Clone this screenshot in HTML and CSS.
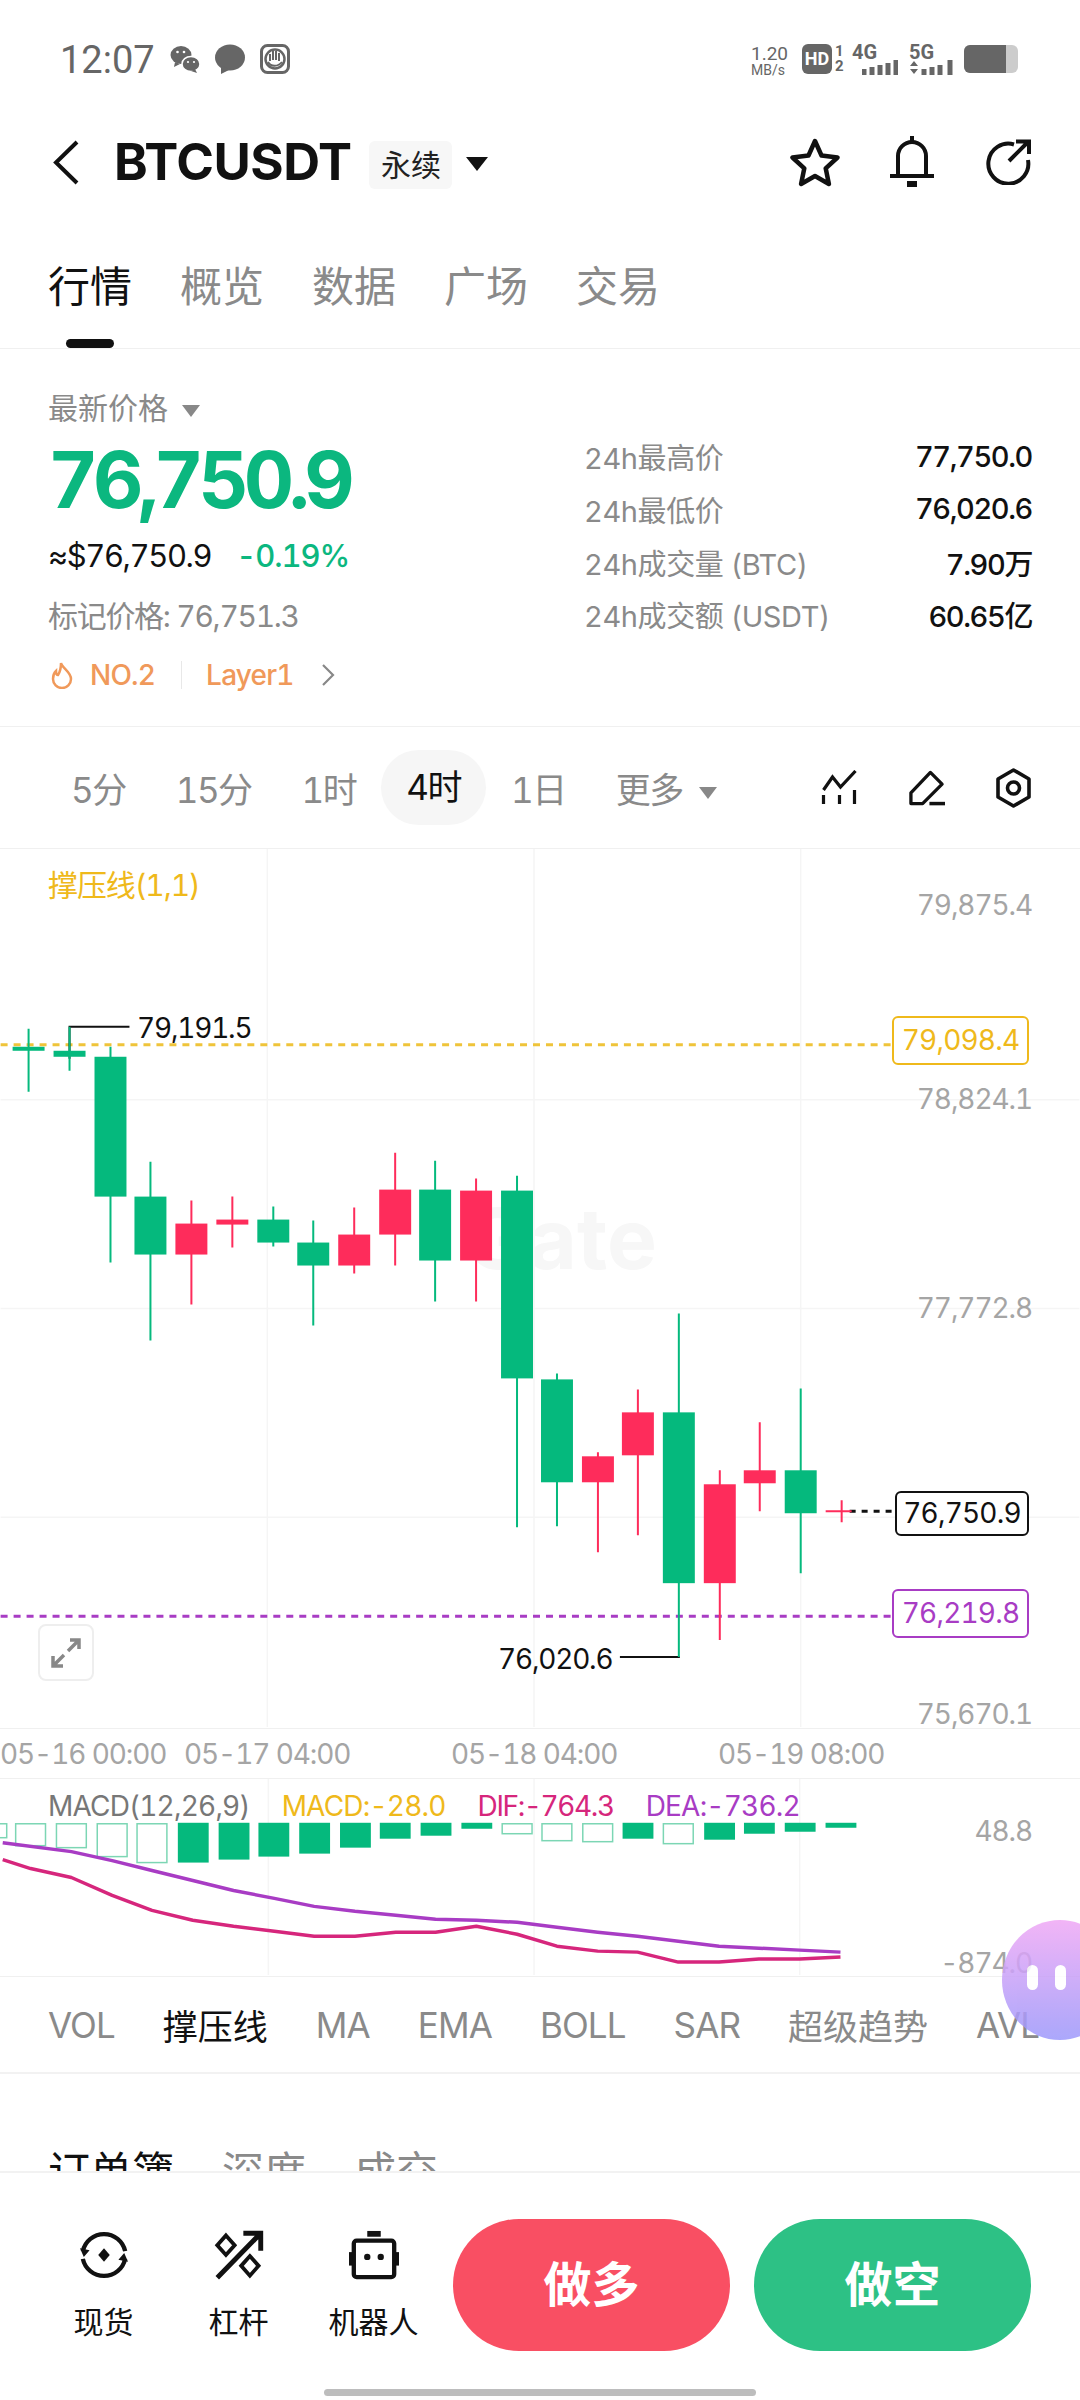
FILE: index.html
```html
<!DOCTYPE html>
<html lang="zh-CN">
<head>
  <meta charset="UTF-8" />
  <title>BTCUSDT 永续</title>
  <meta name="viewport" content="width=device-width, initial-scale=1" />
  <link rel="stylesheet" href="styles.css">
</head>
<body>
<div class="phone">

  <div class="status">
    <span class="clock">12:07</span>
    <svg class="st-icon" viewBox="0 0 30 30"><ellipse cx="11" cy="11" rx="10.500" ry="9" fill="#666"/><path d="M5 18l-1 5 6-3z" fill="#666"/><ellipse cx="21" cy="20" rx="9" ry="7.500" fill="#666" stroke="#fff" stroke-width="1.500"/><path d="M25 25l2 4-6-2z" fill="#666"/><circle cx="7.500" cy="8" r="1.300" fill="#fff"/><circle cx="14" cy="8" r="1.300" fill="#fff"/><circle cx="18" cy="18" r="1.100" fill="#fff"/><circle cx="24" cy="18" r="1.100" fill="#fff"/></svg>
    <svg class="st-icon" viewBox="0 0 30 30"><ellipse cx="15" cy="13.500" rx="15" ry="13" fill="#666"/><path d="M6 22l0 8 10-5z" fill="#666"/></svg>
    <svg class="st-icon" viewBox="0 0 30 30"><rect x="1.500" y="1.500" width="27" height="27" rx="6" fill="#fff" stroke="#666" stroke-width="3"/><circle cx="15" cy="15" r="9.500" fill="none" stroke="#666" stroke-width="2.500"/><path d="M10 17v-7M13 16V7M16 16V7M19 17V9M8 18c3 5 10 5 14 0" fill="none" stroke="#666" stroke-width="2"/></svg>
    <div class="st-right">
      <div class="speed"><span>1.20</span><span>MB/s</span></div>
      <span class="hd">HD</span>
      <div class="sim"><span>1</span><span>2</span></div>
      <div class="net">
        <span>4G</span>
        <svg class="bars" viewBox="0 0 36 15"><path d="M2 9v6M10 7v8M18 5v10M26 3v12M34 0v15" stroke="#666" stroke-width="5"/></svg>
      </div>
      <div class="net net-5g">
        <span>5G</span>
        <svg class="bars-5g" viewBox="0 0 44 15"><path d="M1 6l4-5 4 5zM1 9l4 5 4-5z" fill="#666"/><path d="M15 9v6M23 7v8M31 5v10M41 0v15" stroke="#666" stroke-width="5"/></svg>
      </div>
      <div class="battery"><div class="battery-fill"></div></div>
    </div>
  </div>

  <div class="header">
    <svg class="back" viewBox="0 0 27 45"><path d="M25 2L4 22.500 25 43" fill="none" stroke="#111" stroke-width="4"/></svg>
    <span class="symbol">BTCUSDT</span>
    <span class="contract">永续</span>
    <span class="tri tri-black"></span>
    <div class="header-actions">
      <svg class="act-star" viewBox="0 0 52 50"><path d="M26 4l6.500 14.500 16 2-11.800 10.800 3.200 15.700L26 39l-13.900 8 3.200-15.700L3.500 20.500l16-2z" fill="none" stroke="#111" stroke-width="4.500" stroke-linejoin="round"/></svg>
      <svg class="act-bell" viewBox="0 0 46 52"><path d="M9 39V20a14 14 0 0 1 28 0v19" fill="none" stroke="#111" stroke-width="4"/><path d="M23 0v7M1 40h44" stroke="#111" stroke-width="4"/><rect x="18" y="45" width="10" height="6" fill="#111"/></svg>
      <svg class="act-share" viewBox="0 0 48 46"><path d="M30 5.500A20 20 0 1 0 44 21" fill="none" stroke="#111" stroke-width="4"/><path d="M25 22L44 3M32 2.500h13V15" fill="none" stroke="#111" stroke-width="4"/></svg>
    </div>
  </div>

  <div class="tabs">
    <span class="tab tab-on">行情</span>
    <span class="tab">概览</span>
    <span class="tab">数据</span>
    <span class="tab">广场</span>
    <span class="tab">交易</span>
  </div>

  <div class="quote">
    <div class="quote-left">
      <div class="q-label">最新价格 <span class="tri tri-gray"></span></div>
      <div class="q-price">76,750.9</div>
      <div class="q-sub"><span>≈$76,750.9</span><span class="q-change">-0.19%</span></div>
      <div class="q-mark">标记价格: 76,751.3</div>
      <div class="q-tags">
        <svg class="flame" viewBox="0 0 22 28"><path d="M10 2c1 5 10 9 10 16a9 9 0 0 1-18 0c0-3 1-6 3-8 0 3 1 4 2 4 2-3 3-7 3-12z" fill="none" stroke="#f0995a" stroke-width="2.500"/></svg>
        <span>NO.2</span>
        <i class="q-div"></i>
        <span>Layer1</span>
        <svg class="q-arrow" viewBox="0 0 14 24"><path d="M2 2l10 10L2 22" fill="none" stroke="#888" stroke-width="2.200"/></svg>
      </div>
    </div>
    <div class="quote-right">
      <div class="stat"><span>24h最高价</span><b>77,750.0</b></div>
      <div class="stat"><span>24h最低价</span><b>76,020.6</b></div>
      <div class="stat"><span>24h成交量 (BTC)</span><b>7.90万</b></div>
      <div class="stat"><span>24h成交额 (USDT)</span><b>60.65亿</b></div>
    </div>
  </div>

  <div class="periods">
    <span>5分</span>
    <span>15分</span>
    <span>1时</span>
    <span class="period-on">4时</span>
    <span>1日</span>
    <span>更多 <i class="tri tri-gray"></i></span>
    <div class="period-tools">
      <svg class="tool" viewBox="0 0 36 36"><path d="M2 20L11 7l8 10L34 1" fill="none" stroke="#111" stroke-width="3.200"/><path d="M2 25v9M18 25v9M33 20v14" stroke="#111" stroke-width="3.200"/></svg>
      <svg class="tool" viewBox="0 0 38 36"><path d="M23 2l12 12-20 20H3V23z" fill="none" stroke="#111" stroke-width="3.400" stroke-linejoin="round"/><path d="M22 34h16" stroke="#111" stroke-width="3.600"/></svg>
      <svg class="tool tool-hex" viewBox="0 0 36 40"><path d="M18 2l15.500 9v18L18 38 2.500 29V11z" fill="none" stroke="#111" stroke-width="3.600" stroke-linejoin="round"/><circle cx="18" cy="20" r="6" fill="none" stroke="#111" stroke-width="3.600"/></svg>
    </div>
  </div>

  <div class="chart">
    <svg class="chart-svg" viewBox="0 850 1080 880">
      <path class="grid" d="M267 850V1729M534 850V1729M801 850V1729M0 1101H1080M0 1310H1080M0 1519H1080"/>
      <text class="watermark" x="657" y="1270" text-anchor="end">Gate</text>
      <path class="dash-yellow" d="M0 1046H892"/>
      <path class="dash-purple" d="M0 1618H892"/>
      <path class="dash-black" d="M850 1513H893"/>
      <path class="leader" d="M69 1060V1028H129M620 1659H680"/>
      <path class="wick-up" d="M28 1030V1093M69 1028V1072M110 1048V1264M150 1163V1342M273 1208V1248M313 1222V1327M435 1162V1303M517 1177V1529M557 1375V1528M679 1315V1659M801 1390V1575"/>
      <path class="wick-down" d="M191 1202V1306M232 1198V1249M354 1209V1275M395 1154V1267M476 1180V1303M598 1454V1554M638 1391V1537M720 1472V1642M760 1424V1513M842 1502V1524M826 1513H852"/>
      <g class="up">
        <rect x="12" y="1048" width="32" height="4"/>
        <rect x="53" y="1052" width="32" height="6"/>
        <rect x="94" y="1058" width="32" height="140"/>
        <rect x="134" y="1198" width="32" height="58"/>
        <rect x="257" y="1221" width="32" height="23"/>
        <rect x="297" y="1244" width="32" height="23"/>
        <rect x="419" y="1191" width="32" height="71"/>
        <rect x="501" y="1192" width="32" height="188"/>
        <rect x="541" y="1381" width="32" height="103"/>
        <rect x="663" y="1414" width="32" height="171"/>
        <rect x="785" y="1472" width="32" height="43"/>
      </g>
      <g class="down">
        <rect x="175" y="1225" width="32" height="31"/>
        <rect x="216" y="1221" width="32" height="5"/>
        <rect x="338" y="1236" width="32" height="31"/>
        <rect x="379" y="1191" width="32" height="45"/>
        <rect x="460" y="1192" width="32" height="70"/>
        <rect x="582" y="1458" width="32" height="26"/>
        <rect x="622" y="1414" width="32" height="43"/>
        <rect x="704" y="1486" width="32" height="99"/>
        <rect x="744" y="1472" width="32" height="13"/>
      </g>
    </svg>
    <span class="legend">撑压线(1,1)</span>
    <span class="axis axis-1">79,875.4</span>
    <span class="axis axis-2">78,824.1</span>
    <span class="axis axis-3">77,772.8</span>
    <span class="axis axis-4">75,670.1</span>
    <span class="mark mark-high">79,191.5</span>
    <span class="mark mark-low">76,020.6</span>
    <span class="tag tag-yellow">79,098.4</span>
    <span class="tag tag-black">76,750.9</span>
    <span class="tag tag-purple">76,219.8</span>
    <div class="expand">
      <svg viewBox="0 0 30 30"><path d="M17 13L27 3M19 2h9v9M13 17L3 27M2 18v10h10" fill="none" stroke="#888" stroke-width="3.500"/></svg>
    </div>
  </div>

  <div class="dates">
    <span>05-16 00:00</span>
    <span>05-17 04:00</span>
    <span>05-18 04:00</span>
    <span>05-19 08:00</span>
  </div>

  <div class="macd">
    <svg class="chart-svg" viewBox="0 1780 1080 198">
      <path class="grid" d="M267 1780V1977M534 1780V1977M801 1780V1977"/>
      <g class="hollow">
        <rect x="-12" y="1825" width="16" height="14"/>
        <rect x="13" y="1825" width="30" height="22"/>
        <rect x="54" y="1825" width="30" height="24"/>
        <rect x="95" y="1825" width="30" height="33"/>
        <rect x="135" y="1825" width="30" height="39"/>
        <rect x="502" y="1825" width="30" height="10"/>
        <rect x="542" y="1825" width="30" height="17"/>
        <rect x="583" y="1825" width="30" height="18"/>
        <rect x="664" y="1825" width="30" height="20"/>
      </g>
      <g class="up">
        <rect x="176" y="1824" width="31" height="40"/>
        <rect x="217" y="1824" width="31" height="37"/>
        <rect x="257" y="1824" width="31" height="34"/>
        <rect x="298" y="1824" width="31" height="31"/>
        <rect x="339" y="1824" width="31" height="25"/>
        <rect x="379" y="1824" width="31" height="16"/>
        <rect x="420" y="1824" width="31" height="13"/>
        <rect x="461" y="1824" width="31" height="6"/>
        <rect x="623" y="1824" width="31" height="16"/>
        <rect x="705" y="1824" width="31" height="17"/>
        <rect x="745" y="1824" width="31" height="11"/>
        <rect x="786" y="1824" width="31" height="9"/>
        <rect x="827" y="1824" width="31" height="5"/>
      </g>
      <polyline class="line-dea" points="0,1844 69,1853 110,1862 150,1872 191,1882 232,1892 273,1900 313,1908 354,1913 395,1917 435,1921 476,1922 517,1924 557,1929 598,1934 638,1938 679,1943 720,1948 760,1950 801,1952 842,1954"/>
      <polyline class="line-dif" points="0,1861 28,1870 69,1879 110,1897 150,1912 191,1922 232,1928 273,1933 313,1938 354,1938 395,1934 435,1934 476,1928 517,1936 557,1948 598,1953 638,1954 679,1964 720,1964 760,1961 801,1961 842,1959"/>
    </svg>
    <div class="macd-legend">
      <span class="c-gray">MACD(12,26,9)</span>
      <span class="c-yellow">MACD:-28.0</span>
      <span class="c-pink">DIF:-764.3</span>
      <span class="c-purple">DEA:-736.2</span>
    </div>
    <span class="axis macd-top">48.8</span>
    <span class="axis macd-bottom">-874.0</span>
  </div>

  <div class="indicators">
    <span>VOL</span>
    <span class="ind-on">撑压线</span>
    <span>MA</span>
    <span>EMA</span>
    <span>BOLL</span>
    <span>SAR</span>
    <span class="ind-wide">超级趋势</span>
    <span>AVL</span>
  </div>

  <div class="book-tabs">
    <span class="book-on">订单簿</span>
    <span>深度</span>
    <span>成交</span>
  </div>

  <div class="bottom">
    <div class="actions">
      <div class="action">
        <svg viewBox="0 0 52 52"><path d="M4 22A22.500 22.500 0 0 1 48 22M48 30A22.500 22.500 0 0 1 4 30" fill="none" stroke="#111" stroke-width="4.500"/><path d="M1 19l4 9 6-7zM51 33l-4-9-6 7z" fill="#111"/><path d="M26 19l6 7-6 7-6-7z" fill="#111"/></svg>
        <span>现货</span>
      </div>
      <div class="action">
        <svg viewBox="0 0 46 46"><path d="M3 44L42 4M27 3h16v16" fill="none" stroke="#111" stroke-width="4.500"/><path d="M11 5l8 9-8 9-8-9zM33 24l8 9-8 9-8-9z" fill="none" stroke="#111" stroke-width="3.500"/></svg>
        <span>杠杆</span>
      </div>
      <div class="action">
        <svg viewBox="0 0 52 50"><rect x="19" y="0" width="14" height="6" fill="#111"/><rect x="5" y="10" width="42" height="38" rx="3" fill="none" stroke="#111" stroke-width="4.500"/><rect x="0" y="22" width="3.500" height="14" fill="#111"/><rect x="48.500" y="22" width="3.500" height="14" fill="#111"/><circle cx="19" cy="27" r="3.300" fill="#111"/><circle cx="33" cy="27" r="3.300" fill="#111"/></svg>
        <span>机器人</span>
      </div>
    </div>
    <div class="trade trade-long">做多</div>
    <div class="trade trade-short">做空</div>
    <div class="home-line"></div>
  </div>

  <div class="assistant"><i></i><i></i></div>
</div>
</body>
</html>
```

FILE: styles.css
```css
html, body {
  margin: 0;
  background: #fff;
}

body {
  font-family: Inter, "Noto Sans CJK SC", sans-serif;
  font-variant-numeric: tabular-nums;
  color: #111;
}

.phone {
  position: relative;
  width: 1080px;
  height: 2400px;
  overflow: hidden;
  display: flex;
  flex-direction: column;
}

/* status bar */
.status {
  height: 120px;
  box-sizing: border-box;
  padding: 44px 60px 0;
  display: flex;
  align-items: flex-start;
  color: #666;
}

.clock {
  font-family: Roboto, sans-serif;
  font-size: 38px;
  line-height: 32px;
  width: 110px;
}

.st-icon {
  width: 30px;
  height: 30px;
  margin-right: 15px;
}

.st-right {
  margin-left: auto;
  margin-right: -1px;
  width: 270px;
  height: 32px;
  display: flex;
  font-family: Roboto, sans-serif;
}

.speed {
  width: 51px;
  display: flex;
  flex-direction: column;
  font-size: 14px;
  line-height: 14px;
}

.speed span:first-child {
  font-size: 19px;
  line-height: 19px;
}

.hd {
  width: 30px;
  height: 30px;
  border-radius: 6px;
  background: #666;
  color: #fff;
  font-size: 18px;
  font-weight: 700;
  line-height: 30px;
  text-align: center;
}

.sim {
  width: 20px;
  padding-left: 3px;
  box-sizing: border-box;
  display: flex;
  flex-direction: column;
  font-size: 15px;
  font-weight: 700;
  line-height: 15px;
}

.net {
  width: 57px;
  font-size: 20px;
  font-weight: 700;
  line-height: 16px;
}

.net span {
  display: block;
}

.bars {
  display: block;
  width: 36px;
  height: 15px;
  margin-left: 10px;
}

.net-5g {
  width: 55px;
}

.bars-5g {
  display: block;
  width: 44px;
  height: 15px;
}

.battery {
  width: 54px;
  height: 28px;
  margin-top: 1px;
  border-radius: 6px;
  background: #ccc;
  overflow: hidden;
}

.battery-fill {
  width: 42px;
  height: 28px;
  background: #666;
}

/* header */
.header {
  height: 92px;
  margin-top: -4px;
  padding: 0 48px 0 52px;
  display: flex;
  align-items: center;
}

.back {
  width: 27px;
  height: 45px;
  margin-right: 35px;
}

.symbol {
  font-size: 51px;
  font-weight: 700;
  letter-spacing: -0.500px;
  line-height: 60px;
}

.contract {
  margin-left: 18px;
  width: 83px;
  height: 48px;
  margin-top: 6px;
  background: #f7f7f7;
  border-radius: 6px;
  font-size: 30px;
  line-height: 48px;
  text-align: center;
  color: #222;
}

.tri {
  display: inline-block;
  width: 0;
  height: 0;
  border-left: 9px solid transparent;
  border-right: 9px solid transparent;
}

.tri-black {
  margin-left: 14px;
  margin-top: 4px;
  border-left-width: 11px;
  border-right-width: 11px;
  border-top: 14px solid #111;
}

.tri-gray {
  border-top: 12px solid #888;
  vertical-align: middle;
  margin-left: 6px;
}

.header-actions {
  margin-left: auto;
  display: flex;
  align-items: center;
}

.act-star {
  width: 52px;
  height: 50px;
}

.act-bell {
  width: 46px;
  height: 52px;
  margin-left: 48px;
}

.act-share {
  width: 48px;
  height: 46px;
  margin-left: 49px;
}

/* main tabs */
.tabs {
  height: 141px;
  box-sizing: border-box;
  border-bottom: 1px solid #f0f0f0;
  padding: 51px 48px 0;
  display: flex;
  gap: 48px;
  font-size: 42px;
  color: #8a8a8a;
}

.tab {
  position: relative;
  line-height: 56px;
  height: 56px;
}

.tab-on {
  color: #111;
}

.tab-on::after {
  content: "";
  position: absolute;
  left: 18px;
  top: 80px;
  width: 48px;
  height: 9px;
  border-radius: 5px;
  background: #111;
}

/* quote block */
.quote {
  height: 378px;
  box-sizing: border-box;
  border-bottom: 1px solid #f0f0f0;
  padding: 42px 48px 0;
  display: flex;
  justify-content: space-between;
}

.q-label {
  font-size: 30px;
  line-height: 34px;
  color: #8a8a8a;
}

.q-price {
  margin-top: 10px;
  font-size: 78px;
  font-weight: 700;
  line-height: 90px;
  letter-spacing: -5.400px;
  color: #0bb77f;
}

.q-sub {
  margin-top: 11px;
  font-size: 31px;
  line-height: 40px;
  letter-spacing: -1.400px;
  display: flex;
  gap: 25px;
}

.q-change {
  color: #0bb77f;
  font-weight: 500;
  letter-spacing: -1.100px;
}

.q-mark {
  margin-top: 20px;
  font-size: 30px;
  line-height: 40px;
  letter-spacing: -1.300px;
  color: #8a8a8a;
}

.q-tags {
  margin-top: 19px;
  height: 40px;
  display: flex;
  align-items: center;
  font-size: 28px;
  font-weight: 500;
  letter-spacing: -0.800px;
  color: #f0995a;
}

.flame {
  width: 22px;
  height: 28px;
  margin: 0 17px 0 3px;
}

.q-div {
  width: 1px;
  height: 28px;
  margin: 0 24px 0 26px;
  background: #e8e8e8;
}

.q-arrow {
  width: 14px;
  height: 24px;
  margin-left: 27px;
}

.quote-right {
  width: 448px;
  padding-top: 45px;
}

.stat {
  height: 40px;
  margin-bottom: 12.800px;
  display: flex;
  justify-content: space-between;
  align-items: center;
  font-size: 29px;
  letter-spacing: -0.400px;
  color: #8a8a8a;
}

.stat b {
  font-weight: 500;
  letter-spacing: -1.400px;
  color: #111;
}

/* period selector */
.periods {
  height: 122px;
  box-sizing: border-box;
  border-bottom: 1px solid #f0f0f0;
  padding: 0 48px 0 71px;
  display: flex;
  align-items: center;
  gap: 50px;
  font-size: 35px;
  letter-spacing: -1.500px;
  color: #8a8a8a;
}

.periods .tri-gray {
  margin-left: 8px;
}

.period-on {
  padding: 0 25px;
  margin: 0 -25px;
  height: 75px;
  line-height: 75px;
  border-radius: 38px;
  background: #f6f6f6;
  color: #111;
}

.period-tools {
  margin-left: auto;
  display: flex;
  align-items: center;
  gap: 50px;
}

.tool {
  width: 37px;
  height: 36px;
}

.tool-hex {
  height: 40px;
}

/* candle chart */
.chart {
  position: relative;
  height: 880px;
  flex-shrink: 0;
  border-bottom: 1px solid #f0f0f0;
  box-sizing: border-box;
}

.chart-svg {
  position: absolute;
  left: 0;
  top: 0;
  width: 1080px;
  height: 100%;
}

.grid {
  stroke: #f5f5f5;
  stroke-width: 1.500;
  fill: none;
}

.watermark {
  font-size: 84px;
  font-weight: 700;
  fill: #f7f7f7;
}

.dash-yellow, .dash-purple, .dash-black {
  fill: none;
  stroke-width: 3;
  stroke-dasharray: 7 6;
}

.dash-yellow { stroke: #efc43a; }
.dash-purple { stroke: #a83cc4; }
.dash-black { stroke: #111; stroke-dasharray: 6 6; }

.leader {
  fill: none;
  stroke: #111;
  stroke-width: 2;
}

.wick-up, .wick-down {
  fill: none;
  stroke-width: 2;
}

.wick-up { stroke: #05b97d; }
.wick-down { stroke: #fe2c5b; }
.up rect { fill: #05b97d; }
.down rect { fill: #fe2c5b; }

.legend {
  position: absolute;
  left: 48px;
  top: 16px;
  font-size: 30px;
  line-height: 40px;
  letter-spacing: -1.100px;
  color: #efb91b;
}

.axis {
  position: absolute;
  right: 48px;
  font-size: 28px;
  line-height: 36px;
  letter-spacing: -1.100px;
  color: #a5a5a5;
}

.axis-1 { top: 38px; }
.axis-2 { top: 232px; }
.axis-3 { top: 441px; }
.axis-4 { top: 847px; }

.mark {
  position: absolute;
  font-size: 28px;
  line-height: 36px;
  letter-spacing: -1.200px;
  color: #111;
}

.mark-high { left: 137px; top: 161px; }
.mark-low { left: 498px; top: 792px; }

.tag {
  position: absolute;
  left: 892px;
  width: 137px;
  height: 49px;
  box-sizing: border-box;
  border: 2px solid;
  border-radius: 6px;
  background: #fff;
  font-size: 28px;
  line-height: 45px;
  letter-spacing: -0.800px;
  text-align: center;
}

.tag-yellow { top: 167px; color: #efb91b; }
.tag-purple { top: 740px; color: #a83cc4; }
.tag-black {
  top: 642px;
  left: 895px;
  width: 134px;
  height: 45px;
  line-height: 41px;
  color: #111;
}

.expand {
  position: absolute;
  left: 38px;
  top: 775px;
  width: 56px;
  height: 57px;
  box-sizing: border-box;
  border: 2px solid #eee;
  border-radius: 8px;
  background: #fff;
  display: flex;
  align-items: center;
  justify-content: center;
}

.expand svg {
  width: 30px;
  height: 30px;
}

/* time axis */
.dates {
  height: 50px;
  flex-shrink: 0;
  box-sizing: border-box;
  border-bottom: 1px solid #f0f0f0;
  display: flex;
  gap: 101px;
  font-size: 28px;
  line-height: 50px;
  letter-spacing: -1.100px;
  color: #a5a5a5;
  white-space: nowrap;
}

.dates span {
  width: 166px;
  text-align: center;
}

.dates span:first-child {
  margin-right: -83px;
}

/* macd pane */
.macd {
  position: relative;
  height: 198px;
  flex-shrink: 0;
  box-sizing: border-box;
  border-bottom: 1px solid #f0f0f0;
}

.hollow rect {
  fill: #fff;
  stroke: #7cd6b4;
  stroke-width: 1.500;
}

.line-dea, .line-dif {
  fill: none;
  stroke-width: 3.500;
  stroke-linejoin: round;
}

.line-dea { stroke: #a83cc4; }
.line-dif { stroke: #d6267c; }

.macd-legend {
  position: absolute;
  left: 48px;
  top: 9px;
  display: flex;
  gap: 32px;
  font-size: 28px;
  line-height: 36px;
  letter-spacing: -0.800px;
  white-space: nowrap;
}

.c-gray { color: #777; }
.c-yellow { color: #efb91b; }
.c-pink { color: #d6267c; letter-spacing: -1.400px; }
.c-purple { color: #a83cc4; }

.macd-top { top: 34px; }
.macd-bottom { top: 166px; }

/* indicator names */
.indicators {
  height: 97px;
  flex-shrink: 0;
  box-sizing: border-box;
  border-bottom: 2px solid #f2f2f2;
  padding: 0 0 0 48px;
  display: flex;
  align-items: center;
  gap: 48px;
  font-size: 35px;
  letter-spacing: -0.900px;
  white-space: nowrap;
  color: #8a8a8a;
}

.ind-on {
  color: #111;
  letter-spacing: 0;
}

.ind-wide {
  letter-spacing: 0;
}

/* order book heading, cut by the bottom bar */
.book-tabs {
  height: 97px;
  flex-shrink: 0;
  box-sizing: border-box;
  padding: 73px 48px 0;
  display: flex;
  gap: 48px;
  overflow: hidden;
  font-size: 42px;
  line-height: 50px;
  color: #8a8a8a;
}

.book-on {
  color: #111;
}

/* bottom bar */
.bottom {
  flex: 1;
  box-sizing: border-box;
  border-top: 2px solid #f2f2f2;
  padding: 46px 49px 0 36px;
  display: flex;
  flex-wrap: wrap;
  align-content: flex-start;
  background: #fff;
}

.actions {
  width: 405px;
  margin-right: 12px;
  display: flex;
}

.action {
  width: 135px;
  padding-top: 11px;
  display: flex;
  flex-direction: column;
  align-items: center;
  font-size: 30px;
  line-height: 40px;
}

.action svg {
  width: 50px;
  height: 50px;
  margin-bottom: 22px;
}

.trade {
  width: 277px;
  height: 132px;
  border-radius: 66px;
  color: #fff;
  font-size: 48px;
  font-weight: 700;
  line-height: 132px;
  text-align: center;
}

.trade-long {
  background: #f94f63;
}

.trade-short {
  margin-left: 24px;
  background: #2dc185;
}

.home-line {
  width: 432px;
  height: 7px;
  margin: 38px 0 0 288px;
  border-radius: 4px;
  background: #bdbdbd;
}

/* floating assistant */
.assistant {
  position: absolute;
  left: 1002px;
  top: 1920px;
  width: 116px;
  height: 120px;
  border-radius: 50%;
  background: linear-gradient(180deg, #f0a8f5, #9c98fb);
  opacity: 0.85;
  display: flex;
  gap: 17px;
  padding: 45px 0 0 25px;
  box-sizing: border-box;
}

.assistant i {
  width: 11px;
  height: 25px;
  border-radius: 6px;
  background: #fff;
}
```
